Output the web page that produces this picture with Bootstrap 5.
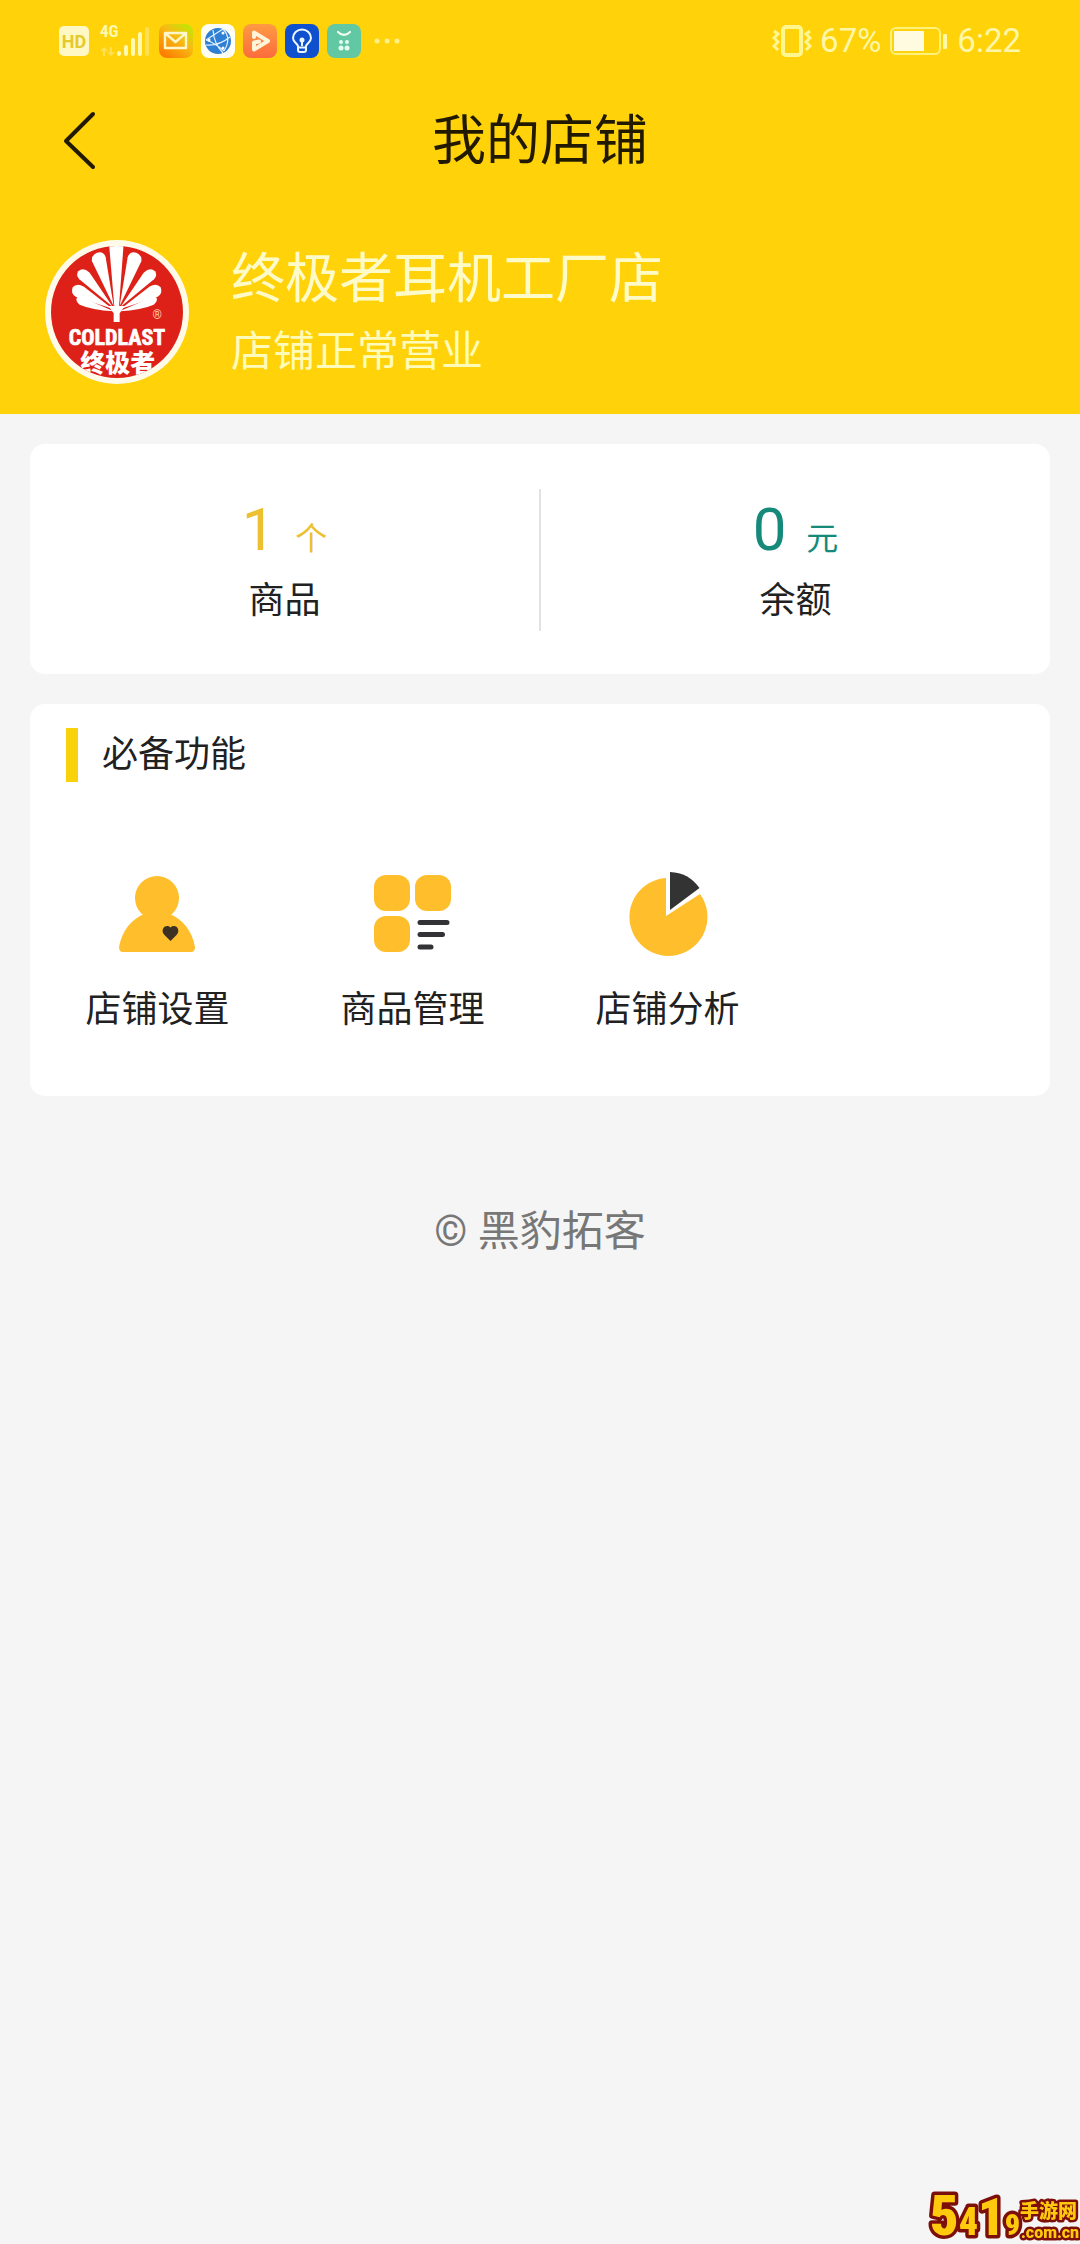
<!DOCTYPE html>
<html lang="zh-CN">
<head>
<meta charset="utf-8">
<meta name="viewport" content="width=device-width, initial-scale=1">
<title>我的店铺</title>
<link href="https://cdn.jsdelivr.net/npm/bootstrap@5.3.0/dist/css/bootstrap.min.css" rel="stylesheet">
<style>
body{background:#f5f5f5;color:#212121;font-family:Roboto,"Noto Sans CJK SC",sans-serif;font-size:36px;line-height:60px;min-height:100vh}
svg{display:block;flex:none;overflow:visible}
.app-head{background:#ffd20a;padding-bottom:30px}
.sys-bar{height:82px;padding:0 59px 0 58px;color:#fff7a8;font-size:33px;line-height:40px}
.sys-icons{gap:8px}
.title-bar{height:116px;padding:4px 60px 0}
.title-bar h1{font-size:54px;line-height:80px;font-weight:400;color:#211a00}
.title-bar .side{width:60px}
.back-btn{display:block;background:none;border:0;padding:0;color:#211a00}
.shop{padding:42px 45px 0;gap:42px}
.shop-name{font-size:54px;line-height:80px;color:#fffbc8;font-weight:400}
.shop-state{font-size:42px;line-height:64px;color:#fffbb8}
.panels{padding:30px 30px 0;gap:30px}
.panel{background:#fff;border:0;border-radius:15px}
.stats{padding:45px 0 43px}
.stat + .stat{border-left:2px solid #e2e2e2}
.stat-num{font-size:60px;line-height:82px}
.stat-num span{font-size:32px;line-height:40px;margin-left:20px}
.gold{color:#ecc02e}
.teal{color:#158a7b}
.tools{padding:24px 0 58px}
.tools h2{font-size:36px;line-height:54px;font-weight:400;gap:24px;padding-left:36px}
.tools h2::before{content:"";width:12px;height:54px;background:#f9d20c}
.tool-grid{margin-top:88px}
.tool{color:#212121;gap:28px;line-height:56px}
.copy{font-size:42px;line-height:64px;color:#777;margin-top:104px}
.stamp{right:0;bottom:0}
</style>
</head>
<body>
<header class="app-head">
  <div class="sys-bar d-flex justify-content-between align-items-center">
    <div class="sys-icons d-flex align-items-center">
      <svg width="32" height="32" viewBox="0 0 32 32"><rect x="1" y="1" width="30" height="30" rx="5" fill="#fff8c4"/><text x="16" y="23" text-anchor="middle" font-family="Roboto" font-weight="700" font-size="18" fill="#e6c92a">HD</text></svg>
      <svg width="53" height="34" viewBox="0 0 53 34"><text x="2" y="13" font-family="Roboto Condensed,Roboto" font-weight="700" font-size="17" fill="#fff9b0">4G</text><g fill="#fff9b0"><rect x="19" y="27" width="4" height="5" rx="2"/><rect x="26" y="21" width="4" height="11" rx="2"/><rect x="33" y="14" width="4" height="18" rx="2"/><rect x="40" y="8" width="4" height="24" rx="2"/></g><g fill="#ffe055"><rect x="47" y="3" width="4" height="29" rx="2"/><path d="M6 23l-4 4h3v5h2v-5h3zM13 32l-4-4h3v-5h2v5h3z"/></g></svg>
      <svg width="34" height="34" viewBox="0 0 34 34"><defs><linearGradient id="ml" x1="1" y1="0" x2="0.2" y2="1"><stop offset="0" stop-color="#b6f000"/><stop offset=".45" stop-color="#f6bd13"/><stop offset="1" stop-color="#ff7a00"/></linearGradient></defs><rect width="34" height="34" rx="8" fill="url(#ml)"/><path d="M6 9h21v15H6zM6 9l10.500 9 10.500-9" fill="none" stroke="#fff6cc" stroke-width="2.4" stroke-linejoin="round"/></svg>
      <svg width="34" height="34" viewBox="0 0 34 34"><rect width="34" height="34" rx="8" fill="#fffef4"/><circle cx="17" cy="17" r="13" fill="#2f7fd4"/><path d="M5 16Q14 10 22 5M5 16Q14 19 23 27M22 5Q31 14 23 27M12 6Q13 20 22 29M5 21Q18 22 29 13" fill="none" stroke="#e3f1ff" stroke-width="1.2"/><circle cx="22" cy="9" r="1.5" fill="#fff"/><circle cx="8" cy="16" r="1.5" fill="#fff"/><circle cx="22" cy="24" r="1.5" fill="#fff"/></svg>
      <svg width="34" height="34" viewBox="0 0 34 34"><defs><linearGradient id="pl" x2="0" y2="1"><stop stop-color="#ff9a43"/><stop offset="1" stop-color="#fb6c3d"/></linearGradient></defs><rect width="34" height="34" rx="8" fill="url(#pl)"/><path d="M11 13V8.500l14 8.500-14 8.500v-7l5-1" fill="none" stroke="#fff3d8" stroke-width="4" stroke-linejoin="round" stroke-linecap="round"/></svg>
      <svg width="34" height="34" viewBox="0 0 34 34"><rect width="34" height="34" rx="8" fill="#0f50cf"/><path d="M13 22C12 19 8 18 8 14a9 8.500 0 0 1 18 0C26 18 22 19 21 22V26q0 2-2 2h-4q-2 0-2-2zM13 23.500h8M17 22v-5" fill="none" stroke="#eaf7ff" stroke-width="2"/><circle cx="17" cy="16" r="2.500" fill="#eaf7ff"/></svg>
      <svg width="34" height="34" viewBox="0 0 34 34"><rect width="34" height="34" rx="8" fill="#62c7a3"/><path d="M11 8q6 6 12 0" fill="none" stroke="#f4fff2" stroke-width="2.200" stroke-linecap="round"/><g fill="#e4fff0"><circle cx="14" cy="18" r="2"/><circle cx="20" cy="18" r="2"/><circle cx="14" cy="24" r="2.500"/><circle cx="20" cy="24" r="2.500"/></g></svg>
      <svg class="ms-1" width="34" height="8" viewBox="0 0 34 8" fill="#fff08a"><circle cx="4" cy="4" r="2.500"/><circle cx="14" cy="4" r="2.500"/><circle cx="24" cy="4" r="2.500"/></svg>
    </div>
    <div class="d-flex align-items-center">
      <svg class="me-1" width="42" height="32" viewBox="0 0 42 32" fill="none" stroke="#fff68f"><rect x="9" y="2" width="18" height="28" rx="3" stroke-width="4"/><path d="M0 6l4 3-4 4 4 4-4 4 4 4M36 6l-4 3 4 4-4 4 4 4-4 4" stroke-width="3"/></svg>
      <span>67%</span>
      <svg class="mx-2" width="60" height="30" viewBox="0 0 60 30"><rect x="2" y="2" width="49" height="26" rx="5" fill="none" stroke="#fff27a" stroke-width="2"/><rect x="5" y="5" width="30" height="20" fill="#fffbe0"/><rect x="54" y="8" width="4" height="15" rx="1" fill="#fff8a8"/></svg>
      <span>6:22</span>
    </div>
  </div>
  <nav class="title-bar d-flex justify-content-between align-items-center" aria-label="页面标题">
    <div class="side"><button class="back-btn" type="button" aria-label="返回"><svg width="38" height="60" viewBox="0 0 38 60"><path d="M33 2L6 29L33 55" fill="none" stroke="currentColor" stroke-width="4" stroke-linecap="round" stroke-linejoin="round"/></svg></button></div>
    <h1 class="mb-0">我的店铺</h1>
    <div class="side"></div>
  </nav>
  <section class="shop d-flex align-items-center">
    <svg width="144" height="144" viewBox="0 0 432 432" role="img" aria-label="COLDLAST 终极者">
      <defs><clipPath id="disc"><circle cx="216" cy="216" r="198"/></clipPath></defs>
      <circle cx="216" cy="216" r="216" fill="#fffbe8"/><circle cx="216" cy="216" r="198" fill="#dd2118"/>
      <g clip-path="url(#disc)" fill="#fff">
        <path d="M192 10h44l-14 190h-14z"/>
        <path id="f1" d="M206 198L141 64Q138 46 156 38q20-6 26 14z"/>
        <path id="f2" d="M203 200L103 118q-12-12-3-24 14-14 34 4z"/>
        <path id="f3" d="M202 206L92 170q-16-9-9-28 12-14 34-2z"/>
        <path id="f4" d="M206 214Q140 210 104 194q-14-10-8-22 8-4 28 6z"/>
        <g transform="matrix(-1 0 0 1 430 0)"><use href="#f1"/><use href="#f2"/><use href="#f3"/><use href="#f4"/></g>
        <path d="M190 198h50l-16 22v26h-18v-26z"/>
        <text x="216" y="315" text-anchor="middle" font-family="'Liberation Sans Narrow','Roboto Condensed',Roboto" font-weight="700" font-size="66" stroke="#fff" stroke-width="2">COLDLAST</text>
        <text x="218" y="397" text-anchor="middle" font-family="Noto Sans CJK SC" font-weight="900" font-size="75">终极者</text>
        <text x="337" y="238" text-anchor="middle" font-family="Roboto" font-size="36" fill="#ffc9ae">®</text>
      </g>
    </svg>
    <div>
      <div class="shop-name">终极者耳机工厂店</div>
      <div class="shop-state">店铺正常营业</div>
    </div>
  </section>
</header>
<main class="panels d-flex flex-column">
  <section class="panel card">
    <div class="stats">
      <div class="row g-0 text-center">
        <div class="col stat"><div class="stat-num gold">1<span>个</span></div><div>商品</div></div>
        <div class="col stat"><div class="stat-num teal">0<span>元</span></div><div>余额</div></div>
      </div>
    </div>
  </section>
  <section class="panel card tools">
    <h2 class="d-flex align-items-center mb-0">必备功能</h2>
    <div class="tool-grid row row-cols-4 g-0">
      <a href="#" class="tool col d-flex flex-column align-items-center text-decoration-none">
        <svg width="84" height="84" viewBox="1 0 84 84"><circle cx="42" cy="28" r="22" fill="#ffbe2b"/><path d="M8 82q-4 0-4-5C7 60 17 49 29 44h26c12 5 22 16 25 33q0 5-4 5z" fill="#ffbe2b"/><path d="M55.500 71l-6-6c-5-5 1-12 6-7.500 5-4.500 11 2.500 6 7.500z" fill="#3c3224"/></svg>
        <span>店铺设置</span></a>
      <a href="#" class="tool col d-flex flex-column align-items-center text-decoration-none">
        <svg width="84" height="84" viewBox="1 0 84 84"><g fill="#ffbe2b"><rect x="4" y="5" width="36" height="36" rx="12"/><rect x="45" y="5" width="36" height="36" rx="12"/><rect x="4" y="46" width="36" height="36" rx="12"/></g><path d="M50 52.500h27M50 64.500h22.500M50 77h11" stroke="#333336" stroke-width="5" stroke-linecap="round"/></svg>
        <span>商品管理</span></a>
      <a href="#" class="tool col d-flex flex-column align-items-center text-decoration-none">
        <svg width="84" height="84" viewBox="2 0 84 84"><path d="M42 8A39 39 0 1 0 76 24L42 46z" fill="#ffbe2b"/><path d="M46 2A38 38 0 0 1 75.500 18L46 40z" fill="#333"/></svg>
        <span>店铺分析</span></a>
    </div>
  </section>
</main>
<footer class="copy text-center">© 黑豹拓客</footer>
<div class="stamp position-fixed">
  <svg width="152" height="60" viewBox="0 0 152 60" role="img" aria-label="5419 手游网 .com.cn">
    <g fill="#ffc90e" stroke="#7d0f0a" stroke-width="7" stroke-linejoin="round" paint-order="stroke" font-weight="900" font-family="'Roboto Condensed',Roboto,'Noto Sans CJK SC',sans-serif">
      <text x="2" y="51" font-size="56">5<tspan font-size="38">4</tspan><tspan font-size="52">1</tspan><tspan font-size="30">9</tspan></text>
      <g stroke-width="5" font-family="Roboto,'Noto Sans CJK SC',sans-serif"><text x="92" y="34" font-size="19">手游网</text><text x="93" y="54" font-size="16">.com.cn</text></g>
    </g>
  </svg>
</div>
<script src="https://cdn.jsdelivr.net/npm/bootstrap@5.3.0/dist/js/bootstrap.bundle.min.js"></script>
</body>
</html>
